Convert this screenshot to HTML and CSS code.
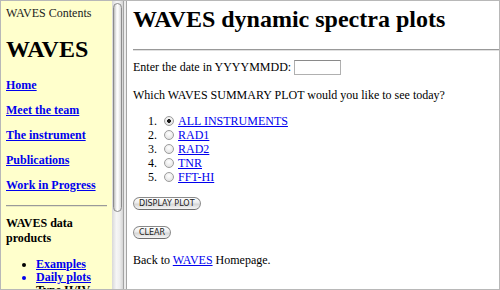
FILE: index.html
```html
<!DOCTYPE html>
<html lang="en">
<head>
  <meta charset="UTF-8" />
  <title>WAVES dynamic spectra plots</title>
  <link rel="stylesheet" href="styles.css">
</head>
<body>
  <div class="frames">
    <div class="nav">
      <p class="nav-title">WAVES Contents</p>
      <h1 class="nav-logo">WAVES</h1>
      <p class="nav-link"><a href="#">Home</a></p>
      <p class="nav-link"><a href="#">Meet the team</a></p>
      <p class="nav-link"><a href="#">The instrument</a></p>
      <p class="nav-link"><a href="#">Publications</a></p>
      <p class="nav-link"><a href="#">Work in Progress</a></p>
      <hr class="nav-rule">
      <p class="nav-heading">WAVES data products</p>
      <ul class="nav-list">
        <li><a href="#">Examples</a></li>
        <li class="current"><a href="#">Daily plots</a></li>
        <li>Type II/IV</li>
      </ul>
    </div>

    <div class="scrollbar"><div class="thumb"></div></div>
    <div class="divider"></div>

    <div class="main">
      <h1>WAVES dynamic spectra plots</h1>
      <hr class="rule">
      <form>
        <p class="date">
          <label for="date">Enter the date in YYYYMMDD:</label>
          <input type="text" id="date" name="date">
        </p>
        <p class="question">Which WAVES SUMMARY PLOT would you like to see today?</p>
        <ol class="plots">
          <li><input type="radio" name="plot" value="all" checked><a href="#">ALL INSTRUMENTS</a></li>
          <li><input type="radio" name="plot" value="rad1"><a href="#">RAD1</a></li>
          <li><input type="radio" name="plot" value="rad2"><a href="#">RAD2</a></li>
          <li><input type="radio" name="plot" value="tnr"><a href="#">TNR</a></li>
          <li><input type="radio" name="plot" value="fft"><a href="#">FFT-HI</a></li>
        </ol>
        <div class="actions">
          <button type="submit">DISPLAY PLOT</button>
          <button type="reset">CLEAR</button>
        </div>
      </form>
      <p class="back">Back to <a href="#">WAVES</a> Homepage.</p>
    </div>
  </div>
</body>
</html>
```

FILE: styles.css
```css
body {
  margin: 0;
  font-family: "Liberation Serif", "Times New Roman", serif;
  color: #000;
  background: #fff;
}

a {
  color: #0000ee;
}

.frames {
  display: flex;
  width: 500px;
  height: 290px;
  box-sizing: border-box;
  border: 1px solid #b8b8b8;
  overflow: hidden;
}

/* left frame */
.nav {
  width: 111px;
  flex-shrink: 0;
  box-sizing: border-box;
  padding: 0 5px 0 5px;
  background: #ffffcc;
  font-size: 12px;
  overflow: hidden;
}

.nav-title {
  margin: 5px 0 0;
  color: #222;
}

.nav-logo {
  font-size: 24px;
  margin: 15px 0 0;
}

.nav-link {
  margin: 16px 0 0;
  line-height: 13px;
  font-weight: bold;
}

.nav-link + .nav-link {
  margin-top: 12px;
}

.nav-rule {
  margin: 13px 0 0;
  border: 0;
  border-top: 1px solid #9a9a9a;
  border-bottom: 1px solid #e8e8c0;
}

.nav-heading {
  margin: 9px 0 0;
  font-weight: bold;
}

.nav-list {
  margin: 12px 0 0;
  padding-left: 30px;
  line-height: 13px;
  font-weight: bold;
}

.nav-list .current {
  color: #0000ee;
}

/* fake frame scrollbar */
.scrollbar {
  width: 11px;
  flex-shrink: 0;
  padding-top: 2px;
  box-sizing: border-box;
  background: linear-gradient(to right, #d8d8d8, #f6f6f6 40%, #eeeeee 70%, #d4d4d4);
}

.thumb {
  height: 209px;
  margin: 0 1px;
  box-sizing: border-box;
  border: 1px solid #8c8c8c;
  border-radius: 5px;
  background: linear-gradient(to right, #bdbdbd, #f4f4f4 35%, #ffffff 55%, #d6d6d6);
}

.divider {
  width: 4px;
  flex-shrink: 0;
  box-sizing: border-box;
  border-left: 1px solid #a4a4a4;
  border-right: 1px solid #a4a4a4;
  background: #ececec;
}

/* right frame */
.main {
  flex: 1;
  padding-left: 6px;
  font-size: 12px;
}

.main h1 {
  font-size: 24px;
  margin: 5px 0 0;
  white-space: nowrap;
}

.rule {
  margin: 16px 0 0;
  border: 0;
  border-top: 1px solid #999;
  border-bottom: 1px solid #e0e0e0;
}

.date {
  display: flex;
  align-items: center;
  gap: 3px;
  margin: 9px 0 0;
}

.date input {
  width: 47px;
  height: 15px;
  box-sizing: border-box;
  margin: 0;
  padding: 0 2px;
  border: 1px solid #b0b0b0;
  border-top-color: #8a8a8a;
  font-size: 11px;
}

.question {
  margin: 13px 0 0;
}

.plots {
  margin: 11px 0 0;
  padding-left: 27px;
  line-height: 14px;
}

.plots input {
  appearance: none;
  -webkit-appearance: none;
  width: 10px;
  height: 10px;
  margin: 0 4px 0 4px;
  border: 1px solid #9c9c9c;
  border-radius: 50%;
  background: radial-gradient(circle at 50% 35%, #ffffff, #dcdcdc);
  vertical-align: -1px;
  box-sizing: border-box;
}

.plots input:checked {
  background: radial-gradient(circle, #1a1a1a 0 1.6px, transparent 2.2px),
              radial-gradient(circle at 50% 35%, #ffffff, #d8d8d8);
}

.actions {
  display: flex;
  flex-direction: column;
  align-items: flex-start;
  gap: 16px;
  margin-top: 13px;
}

.actions button {
  height: 13px;
  padding: 0 5px;
  border: 1px solid #8a8a8a;
  border-bottom-color: #6e6e6e;
  border-radius: 7px;
  background: linear-gradient(#ffffff, #ececec 45%, #d6d6d6 55%, #f6f6f6);
  font-family: "DejaVu Sans", sans-serif;
  font-size: 8px;
  line-height: 11px;
  color: #222;
  cursor: pointer;
}

.back {
  margin: 14px 0 0;
}
```
